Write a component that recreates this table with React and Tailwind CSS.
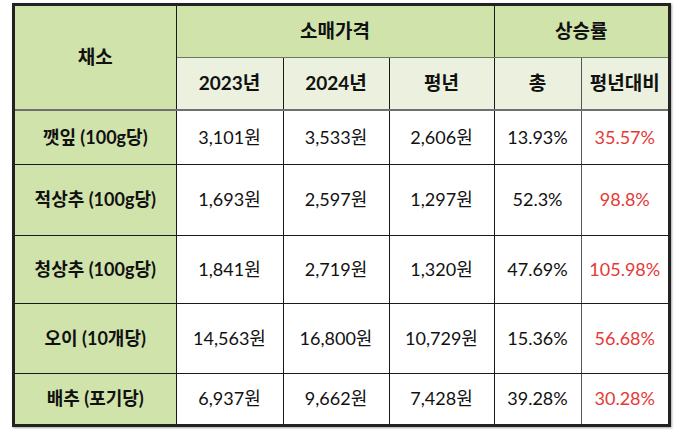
const rows = [
  { name: '깻잎 (100g당)', y23: '3,101원', y24: '3,533원', avg: '2,606원', total: '13.93%', vs: '35.57%', h: 'h-[54px]' },
  { name: '적상추 (100g당)', y23: '1,693원', y24: '2,597원', avg: '1,297원', total: '52.3%', vs: '98.8%', h: 'h-[71px]' },
  { name: '청상추 (100g당)', y23: '1,841원', y24: '2,719원', avg: '1,320원', total: '47.69%', vs: '105.98%', h: 'h-[68px]' },
  { name: '오이 (10개당)', y23: '14,563원', y24: '16,800원', avg: '10,729원', total: '15.36%', vs: '56.68%', h: 'h-[70px]' },
  { name: '배추 (포기당)', y23: '6,937원', y24: '9,662원', avg: '7,428원', total: '39.28%', vs: '30.28%', h: 'h-[51px]' },
];

export default function App() {
  const font = { fontFamily: 'Lato, "Noto Sans CJK KR", sans-serif' };
  return (
    <div className="w-[684px] h-[430px] bg-white pt-[3px] pl-[12px]" style={font}>
      <div className="w-[659px] border-[3px] border-[#222] shadow-[1px_1px_2px_rgba(0,0,0,0.35)]">
        <table className="table-fixed border-collapse w-[653px] text-[18px] text-[#111]">
          <colgroup>
            <col className="w-[161px]" />
            <col className="w-[107px]" />
            <col className="w-[106px]" />
            <col className="w-[105px]" />
            <col className="w-[87px]" />
            <col className="w-[87px]" />
          </colgroup>
          <thead className="text-[19px]">
            <tr className="h-[51px]">
              <th rowSpan={2} className="bg-[#d0e3ab] border-r border-[#1a1a1a] border-b-2 border-b-[#707070] font-bold text-center">
                채소
              </th>
              <th colSpan={3} className="bg-[#d0e3ab] border-r border-[#1a1a1a] border-b border-b-[#6b7b5a] font-bold text-center">
                소매가격
              </th>
              <th colSpan={2} className="bg-[#d0e3ab] border-b border-b-[#6b7b5a] font-bold text-center">
                상승률
              </th>
            </tr>
            <tr className="h-[53px]">
              <th className="bg-[#ebf1de] border-r border-[#1a1a1a] border-b-2 border-b-[#707070] font-bold">2023년</th>
              <th className="bg-[#ebf1de] border-r border-[#1a1a1a] border-b-2 border-b-[#707070] font-bold">2024년</th>
              <th className="bg-[#ebf1de] border-r border-[#1a1a1a] border-b-2 border-b-[#707070] font-bold">평년</th>
              <th className="bg-[#ebf1de] border-r border-[#555] border-b-2 border-b-[#707070] font-bold">총</th>
              <th className="bg-[#ebf1de] border-b-2 border-b-[#707070] font-bold">평년대비</th>
            </tr>
          </thead>
          <tbody>
            {rows.map((r, i) => (
              <tr key={r.name} className={r.h}>
                <td className={`bg-[#d0e3ab] border-r border-[#1a1a1a] font-bold text-center text-[18px] ${i < rows.length - 1 ? 'border-b' : ''}`}>
                  {r.name}
                </td>
                <td className={`border-r border-[#1a1a1a] text-center ${i < rows.length - 1 ? 'border-b' : ''}`}>{r.y23}</td>
                <td className={`border-r border-[#1a1a1a] text-center ${i < rows.length - 1 ? 'border-b' : ''}`}>{r.y24}</td>
                <td className={`border-r border-[#1a1a1a] text-center ${i < rows.length - 1 ? 'border-b' : ''}`}>{r.avg}</td>
                <td className={`border-r border-[#555] border-b-[#1a1a1a] text-center ${i < rows.length - 1 ? 'border-b' : ''}`}>{r.total}</td>
                <td className={`border-[#1a1a1a] text-center text-[#e53935] ${i < rows.length - 1 ? 'border-b' : ''}`}>{r.vs}</td>
              </tr>
            ))}
          </tbody>
        </table>
      </div>
    </div>
  );
}
